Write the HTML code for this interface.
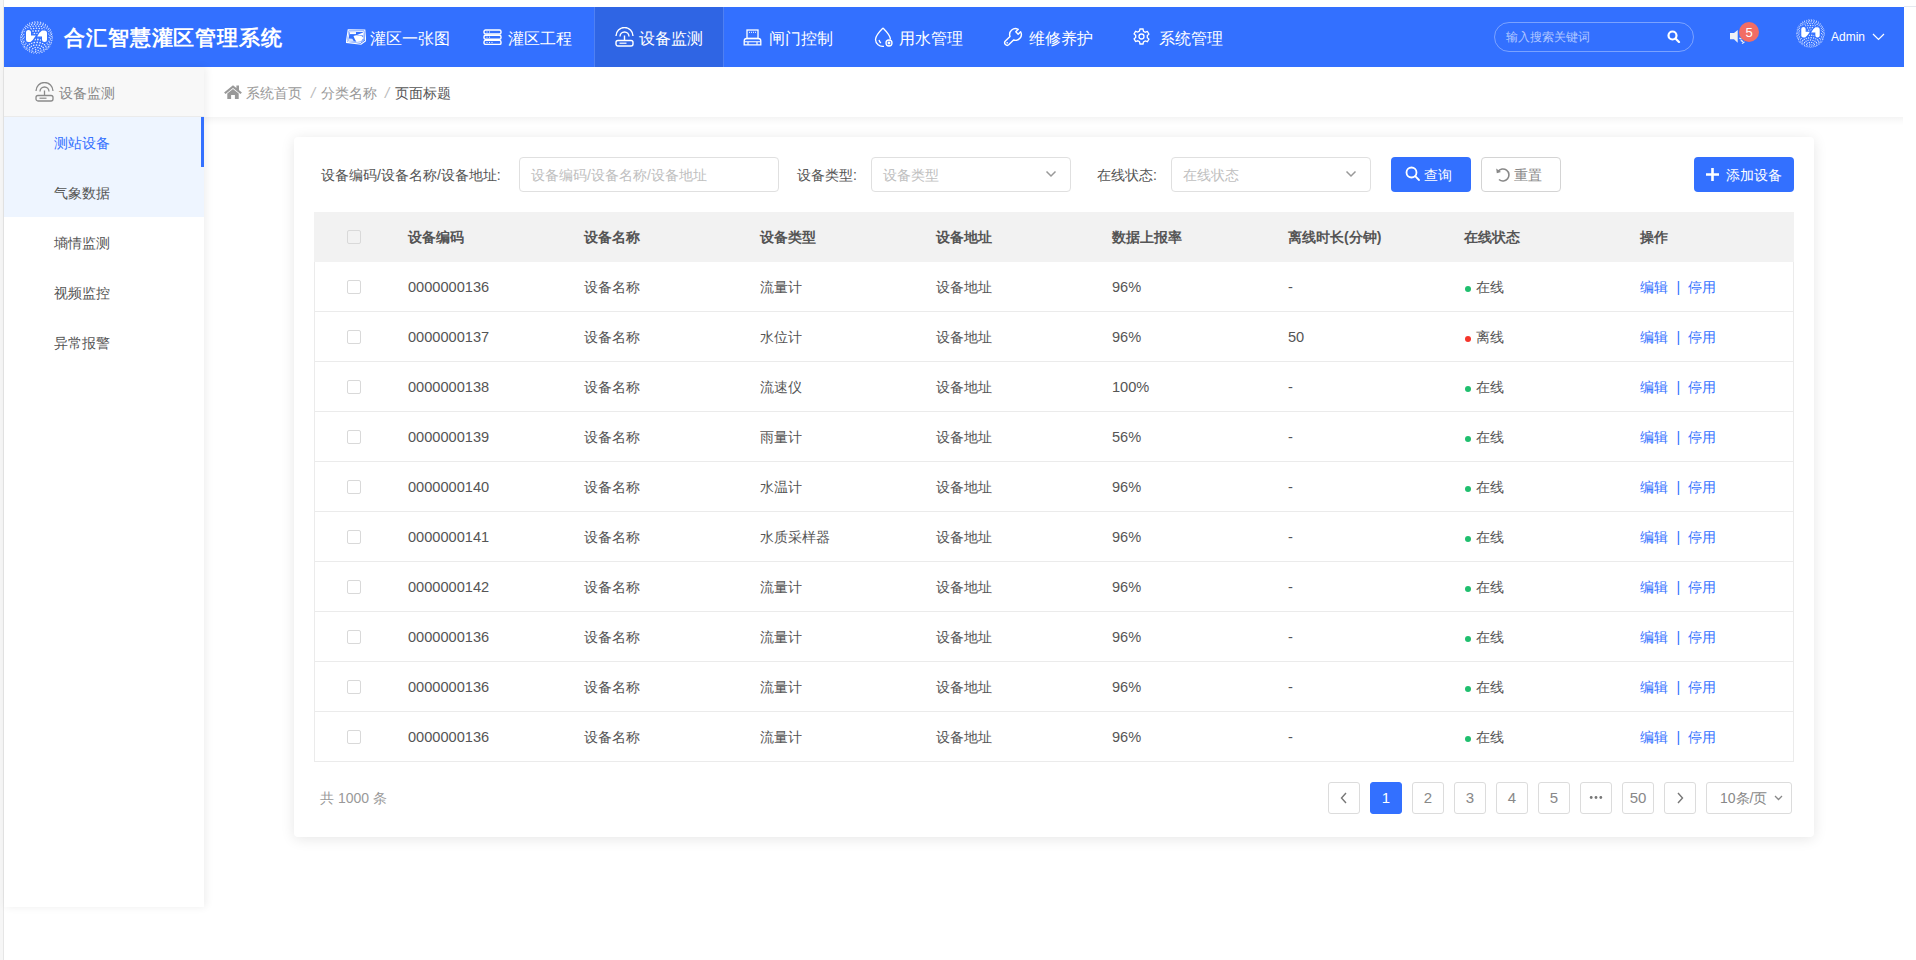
<!DOCTYPE html>
<html><head><meta charset="utf-8">
<style>
*{margin:0;padding:0;box-sizing:border-box}
html,body{width:1916px;height:960px;overflow:hidden;background:#fff;font-family:"Liberation Sans",sans-serif;}
.abs{position:absolute}
.t{position:absolute;white-space:nowrap;line-height:20px}
#strip{left:0;top:0;width:3px;height:960px;background:#f6f6f6}
#stripl{left:3px;top:0;width:1px;height:960px;background:#e6e6e6}
#topline{left:1904px;top:6px;width:12px;height:1px;background:#e4e9ef}
#hdr{left:4px;top:7px;width:1900px;height:60px;background:#3370ff}
.nav{color:#fff;font-size:16px;margin-top:1px}
#tab{left:594px;top:7px;width:130px;height:60px;background:#2f65e4;border-left:1px solid #4f80f2;border-right:1px solid #4f80f2}
#side{left:4px;top:67px;width:200px;height:840px;background:#fff;box-shadow:2px 0 8px rgba(0,0,0,.07)}
#sidehd{left:4px;top:67px;width:200px;height:50px;background:#f8f8f8;border-bottom:1px solid #ebebeb}
.mi{position:absolute;left:4px;width:200px;height:50px}
.mt{position:absolute;left:50px;top:16px;font-size:14px;line-height:20px;color:#555;white-space:nowrap}
#bc{left:204px;top:67px;width:1699px;height:50px;background:#fff}
#bcsh{left:204px;top:117px;width:1699px;height:9px;background:linear-gradient(rgba(0,0,0,.045),rgba(0,0,0,.015) 50%,rgba(0,0,0,0))}
#card{left:293.5px;top:137px;width:1520px;height:700px;background:#fff;border-radius:4px;box-shadow:0 2px 14px rgba(0,0,0,.1)}
.lbl{font-size:14px;color:#555}
.inp{position:absolute;top:157px;height:35px;border:1px solid #e0e0e0;border-radius:4px;background:#fff}
.ph{font-size:14px;color:#c0c0c0}
.btn{position:absolute;top:157px;height:35px;border-radius:4px}
#thead{left:314px;top:212px;width:1480px;height:50px;background:#f2f2f2}
#tbody{left:314px;top:262px;width:1480px;height:500px;border:1px solid #ebebeb;border-top:none}
.row{position:absolute;left:-1px;width:1480px;height:50px;border-bottom:1px solid #ebebeb}
.cb{position:absolute;left:33px;top:18px;width:14px;height:14px;border:1px solid #d9d9d9;border-radius:2px;background:#fff}
.th{position:absolute;top:15px;font-size:14px;line-height:20px;font-weight:bold;color:#555;white-space:nowrap}
.td{position:absolute;top:15px;font-size:14px;line-height:20px;color:#555;white-space:nowrap}
.num{font-size:14.6px}
.dot{position:absolute;left:1151px;top:24px;width:6px;height:6px;border-radius:50%}
.op{color:#3370ff}
.pg{position:absolute;top:782px;width:32px;height:32px;border:1px solid #dcdcdc;border-radius:3px;background:#fff;color:#888;font-size:15px;line-height:30px;text-align:center}
</style></head><body>
<div class="abs" id="strip"></div><div class="abs" id="stripl"></div><div class="abs" id="topline"></div>

<!-- HEADER -->
<div class="abs" id="hdr"></div>
<div class="abs" id="tab"></div>
<!-- logo -->
<svg class="abs" style="left:20px;top:21px" width="33" height="33" viewBox="0 0 33 33">
 
 <g fill="#fff" opacity=".85"><circle cx="20.1" cy="0.9" r="0.45"/><circle cx="17.2" cy="0.5" r="0.47"/><circle cx="14.3" cy="0.7" r="0.46"/><circle cx="25.4" cy="3.2" r="0.46"/><circle cx="23.3" cy="2.1" r="0.50"/><circle cx="20.7" cy="1.4" r="0.53"/><circle cx="17.9" cy="1.0" r="0.55"/><circle cx="15.1" cy="1.0" r="0.55"/><circle cx="12.3" cy="1.4" r="0.53"/><circle cx="9.7" cy="2.1" r="0.50"/><circle cx="7.6" cy="3.2" r="0.46"/><circle cx="27.5" cy="5.1" r="0.50"/><circle cx="25.6" cy="3.8" r="0.55"/><circle cx="23.3" cy="2.9" r="0.59"/><circle cx="20.7" cy="2.2" r="0.61"/><circle cx="17.9" cy="1.9" r="0.63"/><circle cx="15.1" cy="1.9" r="0.63"/><circle cx="12.3" cy="2.2" r="0.61"/><circle cx="9.7" cy="2.9" r="0.59"/><circle cx="7.4" cy="3.8" r="0.55"/><circle cx="5.5" cy="5.1" r="0.50"/><circle cx="30.4" cy="8.6" r="0.49"/><circle cx="29.1" cy="7.2" r="0.54"/><circle cx="27.3" cy="5.9" r="0.59"/><circle cx="25.2" cy="4.8" r="0.64"/><circle cx="22.7" cy="4.0" r="0.67"/><circle cx="20.0" cy="3.5" r="0.69"/><circle cx="17.2" cy="3.2" r="0.70"/><circle cx="14.4" cy="3.3" r="0.70"/><circle cx="11.6" cy="3.7" r="0.68"/><circle cx="9.0" cy="4.4" r="0.66"/><circle cx="6.7" cy="5.3" r="0.62"/><circle cx="4.8" cy="6.5" r="0.57"/><circle cx="3.2" cy="7.9" r="0.52"/><circle cx="2.2" cy="9.4" r="0.45"/><circle cx="32.0" cy="12.5" r="0.47"/><circle cx="31.2" cy="10.9" r="0.53"/><circle cx="30.0" cy="9.5" r="0.59"/><circle cx="28.3" cy="8.2" r="0.64"/><circle cx="26.3" cy="7.1" r="0.69"/><circle cx="24.0" cy="6.2" r="0.72"/><circle cx="21.4" cy="5.5" r="0.75"/><circle cx="18.6" cy="5.2" r="0.76"/><circle cx="15.8" cy="5.1" r="0.77"/><circle cx="13.0" cy="5.3" r="0.76"/><circle cx="10.3" cy="5.8" r="0.74"/><circle cx="7.8" cy="6.6" r="0.71"/><circle cx="5.6" cy="7.6" r="0.66"/><circle cx="3.8" cy="8.8" r="0.62"/><circle cx="2.3" cy="10.2" r="0.56"/><circle cx="1.3" cy="11.7" r="0.50"/><circle cx="32.5" cy="16.5" r="0.45"/><circle cx="32.3" cy="14.9" r="0.51"/><circle cx="31.5" cy="13.4" r="0.58"/><circle cx="30.4" cy="11.9" r="0.63"/><circle cx="28.8" cy="10.6" r="0.69"/><circle cx="26.8" cy="9.5" r="0.73"/><circle cx="24.5" cy="8.6" r="0.77"/><circle cx="22.0" cy="7.9" r="0.80"/><circle cx="19.3" cy="7.5" r="0.81"/><circle cx="16.5" cy="7.3" r="0.82"/><circle cx="13.7" cy="7.5" r="0.81"/><circle cx="11.0" cy="7.9" r="0.80"/><circle cx="8.5" cy="8.6" r="0.77"/><circle cx="6.2" cy="9.5" r="0.73"/><circle cx="4.2" cy="10.6" r="0.69"/><circle cx="2.6" cy="11.9" r="0.63"/><circle cx="1.5" cy="13.4" r="0.58"/><circle cx="0.7" cy="14.9" r="0.51"/><circle cx="0.5" cy="16.5" r="0.45"/><circle cx="32.2" cy="18.9" r="0.50"/><circle cx="32.0" cy="17.3" r="0.56"/><circle cx="31.2" cy="15.7" r="0.62"/><circle cx="30.0" cy="14.3" r="0.68"/><circle cx="28.3" cy="13.0" r="0.74"/><circle cx="26.3" cy="11.8" r="0.78"/><circle cx="24.0" cy="10.9" r="0.82"/><circle cx="21.4" cy="10.3" r="0.84"/><circle cx="18.6" cy="9.9" r="0.86"/><circle cx="15.8" cy="9.9" r="0.86"/><circle cx="13.0" cy="10.1" r="0.85"/><circle cx="10.3" cy="10.6" r="0.83"/><circle cx="7.8" cy="11.4" r="0.80"/><circle cx="5.6" cy="12.4" r="0.76"/><circle cx="3.8" cy="13.6" r="0.71"/><circle cx="2.3" cy="15.0" r="0.65"/><circle cx="1.3" cy="16.5" r="0.59"/><circle cx="0.8" cy="18.1" r="0.53"/><circle cx="0.8" cy="19.7" r="0.46"/><circle cx="31.4" cy="21.2" r="0.54"/><circle cx="31.2" cy="19.6" r="0.61"/><circle cx="30.4" cy="18.0" r="0.67"/><circle cx="29.1" cy="16.6" r="0.73"/><circle cx="27.3" cy="15.3" r="0.78"/><circle cx="25.2" cy="14.2" r="0.82"/><circle cx="22.7" cy="13.4" r="0.86"/><circle cx="20.0" cy="12.9" r="0.88"/><circle cx="17.2" cy="12.6" r="0.89"/><circle cx="14.4" cy="12.7" r="0.88"/><circle cx="11.6" cy="13.1" r="0.87"/><circle cx="9.0" cy="13.8" r="0.84"/><circle cx="6.7" cy="14.7" r="0.80"/><circle cx="4.8" cy="15.9" r="0.76"/><circle cx="3.2" cy="17.3" r="0.70"/><circle cx="2.2" cy="18.8" r="0.64"/><circle cx="1.6" cy="20.4" r="0.58"/><circle cx="1.6" cy="22.0" r="0.51"/><circle cx="31.2" cy="22.8" r="0.48"/><circle cx="30.1" cy="23.3" r="0.58"/><circle cx="29.8" cy="21.7" r="0.65"/><circle cx="29.0" cy="20.2" r="0.71"/><circle cx="27.5" cy="18.7" r="0.77"/><circle cx="25.6" cy="17.5" r="0.82"/><circle cx="23.3" cy="16.6" r="0.86"/><circle cx="20.7" cy="15.9" r="0.88"/><circle cx="17.9" cy="15.6" r="0.90"/><circle cx="15.1" cy="15.6" r="0.90"/><circle cx="12.3" cy="15.9" r="0.88"/><circle cx="9.7" cy="16.6" r="0.86"/><circle cx="7.4" cy="17.5" r="0.82"/><circle cx="5.5" cy="18.7" r="0.77"/><circle cx="4.0" cy="20.2" r="0.71"/><circle cx="3.2" cy="21.7" r="0.65"/><circle cx="2.9" cy="23.3" r="0.58"/><circle cx="3.2" cy="25.0" r="0.52"/><circle cx="4.0" cy="26.5" r="0.46"/><circle cx="29.0" cy="26.5" r="0.46"/><circle cx="29.8" cy="25.0" r="0.52"/><circle cx="28.4" cy="25.3" r="0.62"/><circle cx="28.0" cy="23.6" r="0.69"/><circle cx="27.0" cy="22.1" r="0.75"/><circle cx="25.4" cy="20.7" r="0.80"/><circle cx="23.3" cy="19.7" r="0.85"/><circle cx="20.7" cy="18.9" r="0.88"/><circle cx="17.9" cy="18.5" r="0.89"/><circle cx="15.1" cy="18.5" r="0.89"/><circle cx="12.3" cy="18.9" r="0.88"/><circle cx="9.7" cy="19.7" r="0.85"/><circle cx="7.6" cy="20.7" r="0.80"/><circle cx="6.0" cy="22.1" r="0.75"/><circle cx="5.0" cy="23.6" r="0.69"/><circle cx="4.6" cy="25.3" r="0.62"/><circle cx="5.0" cy="26.9" r="0.56"/><circle cx="6.0" cy="28.4" r="0.50"/><circle cx="27.0" cy="28.4" r="0.50"/><circle cx="28.0" cy="26.9" r="0.56"/><circle cx="26.2" cy="26.9" r="0.65"/><circle cx="25.8" cy="25.3" r="0.72"/><circle cx="24.5" cy="23.8" r="0.78"/><circle cx="22.6" cy="22.5" r="0.83"/><circle cx="20.1" cy="21.7" r="0.86"/><circle cx="17.2" cy="21.3" r="0.88"/><circle cx="14.3" cy="21.5" r="0.87"/><circle cx="11.6" cy="22.1" r="0.85"/><circle cx="9.4" cy="23.1" r="0.81"/><circle cx="7.7" cy="24.5" r="0.75"/><circle cx="6.9" cy="26.1" r="0.69"/><circle cx="6.9" cy="27.7" r="0.62"/><circle cx="7.7" cy="29.3" r="0.56"/><circle cx="9.4" cy="30.7" r="0.50"/><circle cx="11.6" cy="31.7" r="0.46"/><circle cx="22.6" cy="31.3" r="0.48"/><circle cx="24.5" cy="30.0" r="0.53"/><circle cx="25.8" cy="28.5" r="0.59"/><circle cx="23.8" cy="28.2" r="0.68"/><circle cx="23.2" cy="26.6" r="0.74"/><circle cx="21.6" cy="25.2" r="0.80"/><circle cx="19.3" cy="24.3" r="0.83"/><circle cx="16.5" cy="24.0" r="0.85"/><circle cx="13.7" cy="24.3" r="0.83"/><circle cx="11.4" cy="25.2" r="0.80"/><circle cx="9.8" cy="26.6" r="0.74"/><circle cx="9.2" cy="28.2" r="0.68"/><circle cx="9.8" cy="29.8" r="0.62"/><circle cx="11.4" cy="31.1" r="0.56"/><circle cx="13.7" cy="32.0" r="0.53"/><circle cx="16.5" cy="32.3" r="0.51"/><circle cx="19.3" cy="32.0" r="0.53"/><circle cx="21.6" cy="31.1" r="0.56"/><circle cx="23.2" cy="29.8" r="0.62"/><circle cx="21.0" cy="29.1" r="0.70"/><circle cx="20.2" cy="27.5" r="0.76"/><circle cx="17.9" cy="26.6" r="0.80"/><circle cx="15.1" cy="26.6" r="0.80"/><circle cx="12.8" cy="27.5" r="0.76"/><circle cx="12.0" cy="29.1" r="0.70"/><circle cx="12.8" cy="30.6" r="0.64"/><circle cx="15.1" cy="31.5" r="0.60"/><circle cx="17.9" cy="31.5" r="0.60"/><circle cx="20.2" cy="30.6" r="0.64"/><circle cx="18.2" cy="29.5" r="0.71"/><circle cx="15.7" cy="28.7" r="0.74"/><circle cx="15.7" cy="30.4" r="0.67"/></g>
 <path stroke="#3370ff" stroke-width="2.6" d="M6 11.5 Q6 9 8.5 9 Q11 9 11 11.5 V14.6 H15.8 Q13 19.5 10.5 21 H8.3 Q6 21 6 18.7 Z M22 9.5 H24.5 Q27 9.5 27 12 V18.7 Q27 21 24.5 21 Q22 21 22 18.7 V15.4 H17.2 Q19 11.5 22 9.5 Z" fill="#3370ff"/><path d="M6 11.5 Q6 9 8.5 9 Q11 9 11 11.5 V14.6 H15.8 Q13 19.5 10.5 21 H8.3 Q6 21 6 18.7 Z M22 9.5 H24.5 Q27 9.5 27 12 V18.7 Q27 21 24.5 21 Q22 21 22 18.7 V15.4 H17.2 Q19 11.5 22 9.5 Z" fill="#fff"/>
</svg>
<div class="t" style="left:64px;top:27px;font-size:20.6px;line-height:22px;font-weight:900;color:#fff;letter-spacing:0.9px">合汇智慧灌区管理系统</div>

<!-- nav icons -->
<svg class="abs" style="left:346px;top:29px" width="20" height="16" viewBox="0 0 20 16" fill="none" stroke="#fff"><path d="M2.2 0.9 L18.8 1 L19.7 11.7 L15 15.2 L0.3 13.4 Z" stroke-width="1.1"/><path d="M3.3 2.3 L17.5 2.5 L18 10.5 L15 13.5 L1.6 12.5 Z" stroke-width=".9"/><g fill="#fff" stroke="none"><rect x="4" y="3.1" width="6" height="2"/><path d="M11 6 L17 3.6 L17 6.4 Z"/><path d="M7.5 7 Q10 5.6 13 6.5 Q16.5 6.3 17.6 9 L15 12.6 L10.5 13 Q8.5 10 7.5 7 Z"/><path d="M2.6 9.6 L6.3 9.8 L7.8 12.2 L2.3 12 Z" opacity=".8"/></g></svg>
<div class="t nav" style="left:370px;top:28px">灌区一张图</div>
<svg class="abs" style="left:483px;top:29px" width="19" height="16" viewBox="0 0 19 16" fill="none" stroke="#fff" stroke-width="1.4"><rect x="1" y="1" width="17" height="4" rx="1.5"/><rect x="1" y="6.2" width="17" height="4" rx="1.5"/><rect x="1" y="11.4" width="17" height="4" rx="1.5"/><path d="M3.5 3h1M6 3h1M3.5 8.2h1M6 8.2h1M3.5 13.4h1M6 13.4h1M8.5 13.4h1" stroke-width="1"/></svg>
<div class="t nav" style="left:508px;top:28px">灌区工程</div>
<svg class="abs" style="left:615px;top:27px" width="19" height="20" viewBox="0 0 19 20" fill="none" stroke="#fff" stroke-width="1.4"><path d="M1 9 A8.5 8.5 0 0 1 18 9"/><path d="M5 9.5 A4.5 4.5 0 0 1 14 9.5"/><path d="M9.5 8.5 V13"/><rect x="1" y="13.5" width="17" height="5.5" rx="2"/><path d="M4.5 16.2 h7" stroke-width="1.2"/></svg>
<div class="t nav" style="left:639px;top:28px">设备监测</div>
<svg class="abs" style="left:743px;top:29px" width="19" height="17" viewBox="0 0 19 17" fill="none" stroke="#fff" stroke-width="1.3"><rect x="4" y="1" width="11" height="8.5"/><path d="M6 3.3h1M8 3.3h1M10 3.3h1M12 3.3h1" stroke-width="1"/><path d="M1.2 15.8 V12 Q1.2 9.5 3.8 9.5 H15.2 Q17.8 9.5 17.8 12 V15.8 Z"/><path d="M1.2 12.8 H17.8 M5 15.8 V12.8 M14 15.8 V12.8" stroke-width="1.1"/></svg>
<div class="t nav" style="left:769px;top:28px">闸门控制</div>
<svg class="abs" style="left:874px;top:27px" width="19" height="20" viewBox="0 0 19 20" fill="none" stroke="#fff" stroke-width="1.3"><path d="M9 1 C5 5 1.5 9 1.5 12.5 A7.5 7 0 0 0 10 19.3"/><path d="M9 1 C13 5 16.5 9 16.5 12.5"/><circle cx="15" cy="16" r="3"/><circle cx="15" cy="16" r=".8" fill="#fff"/><path d="M5 13 Q5.5 15 7 16" /></svg>
<div class="t nav" style="left:899px;top:28px">用水管理</div>
<svg class="abs" style="left:1003px;top:27px" width="20" height="20" viewBox="0 0 24 24" fill="none" stroke="#fff" stroke-width="1.7" stroke-linejoin="round"><path d="M8.41 11.35 A7 7 0 0 1 18.33 2.84 L15.36 5.82 L18.18 8.64 L21.16 5.67 A7 7 0 0 1 12.65 15.59 L7.12 21.12 A3 3 0 0 1 2.88 16.88 Z"/><circle cx="5" cy="19" r="1" fill="#fff" stroke="none"/></svg>
<div class="t nav" style="left:1029px;top:28px">维修养护</div>
<svg class="abs" style="left:1133px;top:28px" width="17" height="17" viewBox="0 0 17 17" fill="none" stroke="#fff" stroke-width="1.3"><path d="M7 1 h3 l.5 2.2 l1.8 1 l2.1 -.7 l1.5 2.6 l-1.6 1.5 v2 l1.6 1.5 l-1.5 2.6 l-2.1 -.7 l-1.8 1 L10 16 H7 l-.5 -2.2 l-1.8 -1 l-2.1 .7 L1.1 10.9 l1.6 -1.5 v-2 L1.1 5.9 l1.5 -2.6 l2.1 .7 l1.8 -1 Z"/><circle cx="8.5" cy="8.5" r="2.5"/></svg>
<div class="t nav" style="left:1159px;top:28px">系统管理</div>

<!-- search -->
<div class="abs" style="left:1494px;top:22px;width:200px;height:30px;border:1px solid rgba(255,255,255,.35);border-radius:15px"></div>
<div class="t" style="left:1506px;top:27px;font-size:12px;color:rgba(255,255,255,.62)">输入搜索关键词</div>
<svg class="abs" style="left:1667px;top:30px" width="14" height="13" viewBox="0 0 14 13" fill="none" stroke="#fff" stroke-width="2.2"><circle cx="5.5" cy="5.5" r="4"/><path d="M8.5 8.5 L12 12" stroke-linecap="round"/></svg>
<!-- bell -->
<svg class="abs" style="left:1729px;top:29px" width="18" height="17" viewBox="0 0 18 17"><path d="M1 4 H5 L8.7 1 V13.7 L5 10.3 H1 Z" fill="#eef0f6"/><path d="M10.8 9.3 l1.3 .6 M12.2 11.6 l1.4 .8 M13.4 14.2 l1.6 -1" stroke="#eef0f6" stroke-width="1.3" stroke-linecap="round"/></svg>
<div class="abs" style="left:1739px;top:22px;width:20px;height:20px;border-radius:50%;background:#f26d64;color:#fff;font-size:13px;line-height:21px;text-align:center">5</div>
<!-- avatar -->
<svg class="abs" style="left:1796px;top:19px" width="29" height="29" viewBox="0 0 33 33">
 <g fill="#fff" opacity=".85"><circle cx="20.1" cy="0.9" r="0.45"/><circle cx="17.2" cy="0.5" r="0.47"/><circle cx="14.3" cy="0.7" r="0.46"/><circle cx="25.4" cy="3.2" r="0.46"/><circle cx="23.3" cy="2.1" r="0.50"/><circle cx="20.7" cy="1.4" r="0.53"/><circle cx="17.9" cy="1.0" r="0.55"/><circle cx="15.1" cy="1.0" r="0.55"/><circle cx="12.3" cy="1.4" r="0.53"/><circle cx="9.7" cy="2.1" r="0.50"/><circle cx="7.6" cy="3.2" r="0.46"/><circle cx="27.5" cy="5.1" r="0.50"/><circle cx="25.6" cy="3.8" r="0.55"/><circle cx="23.3" cy="2.9" r="0.59"/><circle cx="20.7" cy="2.2" r="0.61"/><circle cx="17.9" cy="1.9" r="0.63"/><circle cx="15.1" cy="1.9" r="0.63"/><circle cx="12.3" cy="2.2" r="0.61"/><circle cx="9.7" cy="2.9" r="0.59"/><circle cx="7.4" cy="3.8" r="0.55"/><circle cx="5.5" cy="5.1" r="0.50"/><circle cx="30.4" cy="8.6" r="0.49"/><circle cx="29.1" cy="7.2" r="0.54"/><circle cx="27.3" cy="5.9" r="0.59"/><circle cx="25.2" cy="4.8" r="0.64"/><circle cx="22.7" cy="4.0" r="0.67"/><circle cx="20.0" cy="3.5" r="0.69"/><circle cx="17.2" cy="3.2" r="0.70"/><circle cx="14.4" cy="3.3" r="0.70"/><circle cx="11.6" cy="3.7" r="0.68"/><circle cx="9.0" cy="4.4" r="0.66"/><circle cx="6.7" cy="5.3" r="0.62"/><circle cx="4.8" cy="6.5" r="0.57"/><circle cx="3.2" cy="7.9" r="0.52"/><circle cx="2.2" cy="9.4" r="0.45"/><circle cx="32.0" cy="12.5" r="0.47"/><circle cx="31.2" cy="10.9" r="0.53"/><circle cx="30.0" cy="9.5" r="0.59"/><circle cx="28.3" cy="8.2" r="0.64"/><circle cx="26.3" cy="7.1" r="0.69"/><circle cx="24.0" cy="6.2" r="0.72"/><circle cx="21.4" cy="5.5" r="0.75"/><circle cx="18.6" cy="5.2" r="0.76"/><circle cx="15.8" cy="5.1" r="0.77"/><circle cx="13.0" cy="5.3" r="0.76"/><circle cx="10.3" cy="5.8" r="0.74"/><circle cx="7.8" cy="6.6" r="0.71"/><circle cx="5.6" cy="7.6" r="0.66"/><circle cx="3.8" cy="8.8" r="0.62"/><circle cx="2.3" cy="10.2" r="0.56"/><circle cx="1.3" cy="11.7" r="0.50"/><circle cx="32.5" cy="16.5" r="0.45"/><circle cx="32.3" cy="14.9" r="0.51"/><circle cx="31.5" cy="13.4" r="0.58"/><circle cx="30.4" cy="11.9" r="0.63"/><circle cx="28.8" cy="10.6" r="0.69"/><circle cx="26.8" cy="9.5" r="0.73"/><circle cx="24.5" cy="8.6" r="0.77"/><circle cx="22.0" cy="7.9" r="0.80"/><circle cx="19.3" cy="7.5" r="0.81"/><circle cx="16.5" cy="7.3" r="0.82"/><circle cx="13.7" cy="7.5" r="0.81"/><circle cx="11.0" cy="7.9" r="0.80"/><circle cx="8.5" cy="8.6" r="0.77"/><circle cx="6.2" cy="9.5" r="0.73"/><circle cx="4.2" cy="10.6" r="0.69"/><circle cx="2.6" cy="11.9" r="0.63"/><circle cx="1.5" cy="13.4" r="0.58"/><circle cx="0.7" cy="14.9" r="0.51"/><circle cx="0.5" cy="16.5" r="0.45"/><circle cx="32.2" cy="18.9" r="0.50"/><circle cx="32.0" cy="17.3" r="0.56"/><circle cx="31.2" cy="15.7" r="0.62"/><circle cx="30.0" cy="14.3" r="0.68"/><circle cx="28.3" cy="13.0" r="0.74"/><circle cx="26.3" cy="11.8" r="0.78"/><circle cx="24.0" cy="10.9" r="0.82"/><circle cx="21.4" cy="10.3" r="0.84"/><circle cx="18.6" cy="9.9" r="0.86"/><circle cx="15.8" cy="9.9" r="0.86"/><circle cx="13.0" cy="10.1" r="0.85"/><circle cx="10.3" cy="10.6" r="0.83"/><circle cx="7.8" cy="11.4" r="0.80"/><circle cx="5.6" cy="12.4" r="0.76"/><circle cx="3.8" cy="13.6" r="0.71"/><circle cx="2.3" cy="15.0" r="0.65"/><circle cx="1.3" cy="16.5" r="0.59"/><circle cx="0.8" cy="18.1" r="0.53"/><circle cx="0.8" cy="19.7" r="0.46"/><circle cx="31.4" cy="21.2" r="0.54"/><circle cx="31.2" cy="19.6" r="0.61"/><circle cx="30.4" cy="18.0" r="0.67"/><circle cx="29.1" cy="16.6" r="0.73"/><circle cx="27.3" cy="15.3" r="0.78"/><circle cx="25.2" cy="14.2" r="0.82"/><circle cx="22.7" cy="13.4" r="0.86"/><circle cx="20.0" cy="12.9" r="0.88"/><circle cx="17.2" cy="12.6" r="0.89"/><circle cx="14.4" cy="12.7" r="0.88"/><circle cx="11.6" cy="13.1" r="0.87"/><circle cx="9.0" cy="13.8" r="0.84"/><circle cx="6.7" cy="14.7" r="0.80"/><circle cx="4.8" cy="15.9" r="0.76"/><circle cx="3.2" cy="17.3" r="0.70"/><circle cx="2.2" cy="18.8" r="0.64"/><circle cx="1.6" cy="20.4" r="0.58"/><circle cx="1.6" cy="22.0" r="0.51"/><circle cx="31.2" cy="22.8" r="0.48"/><circle cx="30.1" cy="23.3" r="0.58"/><circle cx="29.8" cy="21.7" r="0.65"/><circle cx="29.0" cy="20.2" r="0.71"/><circle cx="27.5" cy="18.7" r="0.77"/><circle cx="25.6" cy="17.5" r="0.82"/><circle cx="23.3" cy="16.6" r="0.86"/><circle cx="20.7" cy="15.9" r="0.88"/><circle cx="17.9" cy="15.6" r="0.90"/><circle cx="15.1" cy="15.6" r="0.90"/><circle cx="12.3" cy="15.9" r="0.88"/><circle cx="9.7" cy="16.6" r="0.86"/><circle cx="7.4" cy="17.5" r="0.82"/><circle cx="5.5" cy="18.7" r="0.77"/><circle cx="4.0" cy="20.2" r="0.71"/><circle cx="3.2" cy="21.7" r="0.65"/><circle cx="2.9" cy="23.3" r="0.58"/><circle cx="3.2" cy="25.0" r="0.52"/><circle cx="4.0" cy="26.5" r="0.46"/><circle cx="29.0" cy="26.5" r="0.46"/><circle cx="29.8" cy="25.0" r="0.52"/><circle cx="28.4" cy="25.3" r="0.62"/><circle cx="28.0" cy="23.6" r="0.69"/><circle cx="27.0" cy="22.1" r="0.75"/><circle cx="25.4" cy="20.7" r="0.80"/><circle cx="23.3" cy="19.7" r="0.85"/><circle cx="20.7" cy="18.9" r="0.88"/><circle cx="17.9" cy="18.5" r="0.89"/><circle cx="15.1" cy="18.5" r="0.89"/><circle cx="12.3" cy="18.9" r="0.88"/><circle cx="9.7" cy="19.7" r="0.85"/><circle cx="7.6" cy="20.7" r="0.80"/><circle cx="6.0" cy="22.1" r="0.75"/><circle cx="5.0" cy="23.6" r="0.69"/><circle cx="4.6" cy="25.3" r="0.62"/><circle cx="5.0" cy="26.9" r="0.56"/><circle cx="6.0" cy="28.4" r="0.50"/><circle cx="27.0" cy="28.4" r="0.50"/><circle cx="28.0" cy="26.9" r="0.56"/><circle cx="26.2" cy="26.9" r="0.65"/><circle cx="25.8" cy="25.3" r="0.72"/><circle cx="24.5" cy="23.8" r="0.78"/><circle cx="22.6" cy="22.5" r="0.83"/><circle cx="20.1" cy="21.7" r="0.86"/><circle cx="17.2" cy="21.3" r="0.88"/><circle cx="14.3" cy="21.5" r="0.87"/><circle cx="11.6" cy="22.1" r="0.85"/><circle cx="9.4" cy="23.1" r="0.81"/><circle cx="7.7" cy="24.5" r="0.75"/><circle cx="6.9" cy="26.1" r="0.69"/><circle cx="6.9" cy="27.7" r="0.62"/><circle cx="7.7" cy="29.3" r="0.56"/><circle cx="9.4" cy="30.7" r="0.50"/><circle cx="11.6" cy="31.7" r="0.46"/><circle cx="22.6" cy="31.3" r="0.48"/><circle cx="24.5" cy="30.0" r="0.53"/><circle cx="25.8" cy="28.5" r="0.59"/><circle cx="23.8" cy="28.2" r="0.68"/><circle cx="23.2" cy="26.6" r="0.74"/><circle cx="21.6" cy="25.2" r="0.80"/><circle cx="19.3" cy="24.3" r="0.83"/><circle cx="16.5" cy="24.0" r="0.85"/><circle cx="13.7" cy="24.3" r="0.83"/><circle cx="11.4" cy="25.2" r="0.80"/><circle cx="9.8" cy="26.6" r="0.74"/><circle cx="9.2" cy="28.2" r="0.68"/><circle cx="9.8" cy="29.8" r="0.62"/><circle cx="11.4" cy="31.1" r="0.56"/><circle cx="13.7" cy="32.0" r="0.53"/><circle cx="16.5" cy="32.3" r="0.51"/><circle cx="19.3" cy="32.0" r="0.53"/><circle cx="21.6" cy="31.1" r="0.56"/><circle cx="23.2" cy="29.8" r="0.62"/><circle cx="21.0" cy="29.1" r="0.70"/><circle cx="20.2" cy="27.5" r="0.76"/><circle cx="17.9" cy="26.6" r="0.80"/><circle cx="15.1" cy="26.6" r="0.80"/><circle cx="12.8" cy="27.5" r="0.76"/><circle cx="12.0" cy="29.1" r="0.70"/><circle cx="12.8" cy="30.6" r="0.64"/><circle cx="15.1" cy="31.5" r="0.60"/><circle cx="17.9" cy="31.5" r="0.60"/><circle cx="20.2" cy="30.6" r="0.64"/><circle cx="18.2" cy="29.5" r="0.71"/><circle cx="15.7" cy="28.7" r="0.74"/><circle cx="15.7" cy="30.4" r="0.67"/></g>
 <path stroke="#3370ff" stroke-width="2.6" d="M6 11.5 Q6 9 8.5 9 Q11 9 11 11.5 V14.6 H15.8 Q13 19.5 10.5 21 H8.3 Q6 21 6 18.7 Z M22 9.5 H24.5 Q27 9.5 27 12 V18.7 Q27 21 24.5 21 Q22 21 22 18.7 V15.4 H17.2 Q19 11.5 22 9.5 Z" fill="#3370ff"/><path d="M6 11.5 Q6 9 8.5 9 Q11 9 11 11.5 V14.6 H15.8 Q13 19.5 10.5 21 H8.3 Q6 21 6 18.7 Z M22 9.5 H24.5 Q27 9.5 27 12 V18.7 Q27 21 24.5 21 Q22 21 22 18.7 V15.4 H17.2 Q19 11.5 22 9.5 Z" fill="#fff"/>
</svg>
<div class="t" style="left:1831px;top:27px;font-size:12px;color:#fff">Admin</div>
<svg class="abs" style="left:1872px;top:33px" width="13" height="8" viewBox="0 0 13 8" fill="none" stroke="#fff" stroke-width="1.2"><path d="M1 1 L6.5 6.5 L12 1"/></svg>

<!-- BREADCRUMB -->
<div class="abs" id="bc"></div><div class="abs" id="bcsh"></div>
<svg class="abs" style="left:224px;top:85px" width="18" height="14" viewBox="0 0 18 14"><path d="M9 0.3 L17.9 7.5 L16.5 9.1 L9 3 L1.5 9.1 L0.1 7.5 Z M12.4 0.6 h2.6 v4.6 L12.4 3.1 Z M3.3 8.6 L9 4 L14.7 8.6 V14 H10.9 V10 H7.1 V14 H3.3 Z" fill="#999"/></svg>
<div class="t" style="left:246px;top:83px;font-size:14px;color:#999">系统首页</div>
<div class="t" style="left:311px;top:83px;font-size:15px;color:#bbb;font-style:italic">/</div>
<div class="t" style="left:321px;top:83px;font-size:14px;color:#999">分类名称</div>
<div class="t" style="left:385px;top:83px;font-size:15px;color:#bbb;font-style:italic">/</div>
<div class="t" style="left:395px;top:83px;font-size:14px;color:#555">页面标题</div>

<!-- SIDEBAR -->
<div class="abs" id="side"></div>
<div class="abs" id="sidehd"></div>
<svg class="abs" style="left:35px;top:82px" width="19" height="20" viewBox="0 0 19 20" fill="none" stroke="#8a8a8a" stroke-width="1.3"><path d="M1 9 A8.5 8.5 0 0 1 18 9"/><path d="M5 9.5 A4.5 4.5 0 0 1 14 9.5"/><path d="M9.5 8.5 V13"/><rect x="1" y="13.5" width="17" height="5.5" rx="2"/><path d="M4.5 16.2 h7" stroke-width="1.2"/></svg>
<div class="t" style="left:59px;top:83px;font-size:14px;color:#888">设备监测</div>
<div class="mi" style="top:117px;background:#eef5ff"><div class="mt" style="color:#3370ff">测站设备</div><div class="abs" style="left:197px;top:0;width:3px;height:50px;background:#3370ff"></div></div>
<div class="mi" style="top:167px;background:#eef5ff"><div class="mt">气象数据</div></div>
<div class="mi" style="top:217px"><div class="mt">墒情监测</div></div>
<div class="mi" style="top:267px"><div class="mt">视频监控</div></div>
<div class="mi" style="top:317px"><div class="mt">异常报警</div></div>

<!-- CARD -->
<div class="abs" id="card"></div>
<div class="t lbl" style="left:321px;top:165px">设备编码/设备名称/设备地址:</div>
<div class="inp" style="left:519px;width:260px"></div>
<div class="t ph" style="left:531px;top:165px">设备编码/设备名称/设备地址</div>
<div class="t lbl" style="left:797px;top:165px">设备类型:</div>
<div class="inp" style="left:871px;width:200px"></div>
<div class="t ph" style="left:883px;top:165px">设备类型</div>
<svg class="abs" style="left:1045px;top:170px" width="12" height="8" viewBox="0 0 12 8" fill="none" stroke="#999" stroke-width="1.5"><path d="M1.5 1.5 L6 6 L10.5 1.5"/></svg>
<div class="t lbl" style="left:1097px;top:165px">在线状态:</div>
<div class="inp" style="left:1171px;width:200px"></div>
<div class="t ph" style="left:1183px;top:165px">在线状态</div>
<svg class="abs" style="left:1345px;top:170px" width="12" height="8" viewBox="0 0 12 8" fill="none" stroke="#999" stroke-width="1.5"><path d="M1.5 1.5 L6 6 L10.5 1.5"/></svg>

<div class="btn" style="left:1391px;width:80px;background:#3370ff"></div>
<svg class="abs" style="left:1405px;top:166px" width="16" height="16" viewBox="0 0 16 16" fill="none" stroke="#fff" stroke-width="1.8"><circle cx="6.5" cy="6.5" r="5"/><path d="M10.2 10.2 L14 14" stroke-linecap="round"/></svg>
<div class="t" style="left:1424px;top:165px;font-size:14px;color:#fff">查询</div>
<div class="btn" style="left:1481px;width:80px;border:1px solid #d4d4d4;background:#fff"></div>
<svg class="abs" style="left:1495px;top:167px" width="15" height="15" viewBox="0 0 15 15" fill="none" stroke="#888" stroke-width="1.6"><path d="M3 4.5 A6 6 0 1 1 4 12.5"/><path d="M1.2 1.5 L1.8 6.2 L6 5" fill="#888" stroke="none"/></svg>
<div class="t" style="left:1514px;top:165px;font-size:14px;color:#888">重置</div>
<div class="btn" style="left:1694px;width:100px;background:#3370ff"></div>
<svg class="abs" style="left:1706px;top:168px" width="13" height="13" viewBox="0 0 13 13" stroke="#fff" stroke-width="2.6"><path d="M6.5 0 V13 M0 6.5 H13"/></svg>
<div class="t" style="left:1726px;top:165px;font-size:14px;color:#fff">添加设备</div>

<!-- TABLE -->
<div class="abs" id="thead">
 <div class="cb" style="background:transparent"></div>
 <div class="th" style="left:94px">设备编码</div>
 <div class="th" style="left:270px">设备名称</div>
 <div class="th" style="left:446px">设备类型</div>
 <div class="th" style="left:622px">设备地址</div>
 <div class="th" style="left:798px">数据上报率</div>
 <div class="th" style="left:974px">离线时长(分钟)</div>
 <div class="th" style="left:1150px">在线状态</div>
 <div class="th" style="left:1326px">操作</div>
</div>
<div class="abs" id="tbody">
<div class="row" style="top:0px"><div class="cb"></div><div class="td num" style="left:94px">0000000136</div><div class="td" style="left:270px">设备名称</div><div class="td" style="left:446px">流量计</div><div class="td" style="left:622px">设备地址</div><div class="td num" style="left:798px">96%</div><div class="td num" style="left:974px">-</div><div class="dot" style="background:#1fbf6e"></div><div class="td" style="left:1162px">在线</div><div class="td op" style="left:1326px">编辑</div><div class="td op" style="left:1362.5px">|</div><div class="td op" style="left:1374px">停用</div></div>
<div class="row" style="top:50px"><div class="cb"></div><div class="td num" style="left:94px">0000000137</div><div class="td" style="left:270px">设备名称</div><div class="td" style="left:446px">水位计</div><div class="td" style="left:622px">设备地址</div><div class="td num" style="left:798px">96%</div><div class="td num" style="left:974px">50</div><div class="dot" style="background:#f5352b"></div><div class="td" style="left:1162px">离线</div><div class="td op" style="left:1326px">编辑</div><div class="td op" style="left:1362.5px">|</div><div class="td op" style="left:1374px">停用</div></div>
<div class="row" style="top:100px"><div class="cb"></div><div class="td num" style="left:94px">0000000138</div><div class="td" style="left:270px">设备名称</div><div class="td" style="left:446px">流速仪</div><div class="td" style="left:622px">设备地址</div><div class="td num" style="left:798px">100%</div><div class="td num" style="left:974px">-</div><div class="dot" style="background:#1fbf6e"></div><div class="td" style="left:1162px">在线</div><div class="td op" style="left:1326px">编辑</div><div class="td op" style="left:1362.5px">|</div><div class="td op" style="left:1374px">停用</div></div>
<div class="row" style="top:150px"><div class="cb"></div><div class="td num" style="left:94px">0000000139</div><div class="td" style="left:270px">设备名称</div><div class="td" style="left:446px">雨量计</div><div class="td" style="left:622px">设备地址</div><div class="td num" style="left:798px">56%</div><div class="td num" style="left:974px">-</div><div class="dot" style="background:#1fbf6e"></div><div class="td" style="left:1162px">在线</div><div class="td op" style="left:1326px">编辑</div><div class="td op" style="left:1362.5px">|</div><div class="td op" style="left:1374px">停用</div></div>
<div class="row" style="top:200px"><div class="cb"></div><div class="td num" style="left:94px">0000000140</div><div class="td" style="left:270px">设备名称</div><div class="td" style="left:446px">水温计</div><div class="td" style="left:622px">设备地址</div><div class="td num" style="left:798px">96%</div><div class="td num" style="left:974px">-</div><div class="dot" style="background:#1fbf6e"></div><div class="td" style="left:1162px">在线</div><div class="td op" style="left:1326px">编辑</div><div class="td op" style="left:1362.5px">|</div><div class="td op" style="left:1374px">停用</div></div>
<div class="row" style="top:250px"><div class="cb"></div><div class="td num" style="left:94px">0000000141</div><div class="td" style="left:270px">设备名称</div><div class="td" style="left:446px">水质采样器</div><div class="td" style="left:622px">设备地址</div><div class="td num" style="left:798px">96%</div><div class="td num" style="left:974px">-</div><div class="dot" style="background:#1fbf6e"></div><div class="td" style="left:1162px">在线</div><div class="td op" style="left:1326px">编辑</div><div class="td op" style="left:1362.5px">|</div><div class="td op" style="left:1374px">停用</div></div>
<div class="row" style="top:300px"><div class="cb"></div><div class="td num" style="left:94px">0000000142</div><div class="td" style="left:270px">设备名称</div><div class="td" style="left:446px">流量计</div><div class="td" style="left:622px">设备地址</div><div class="td num" style="left:798px">96%</div><div class="td num" style="left:974px">-</div><div class="dot" style="background:#1fbf6e"></div><div class="td" style="left:1162px">在线</div><div class="td op" style="left:1326px">编辑</div><div class="td op" style="left:1362.5px">|</div><div class="td op" style="left:1374px">停用</div></div>
<div class="row" style="top:350px"><div class="cb"></div><div class="td num" style="left:94px">0000000136</div><div class="td" style="left:270px">设备名称</div><div class="td" style="left:446px">流量计</div><div class="td" style="left:622px">设备地址</div><div class="td num" style="left:798px">96%</div><div class="td num" style="left:974px">-</div><div class="dot" style="background:#1fbf6e"></div><div class="td" style="left:1162px">在线</div><div class="td op" style="left:1326px">编辑</div><div class="td op" style="left:1362.5px">|</div><div class="td op" style="left:1374px">停用</div></div>
<div class="row" style="top:400px"><div class="cb"></div><div class="td num" style="left:94px">0000000136</div><div class="td" style="left:270px">设备名称</div><div class="td" style="left:446px">流量计</div><div class="td" style="left:622px">设备地址</div><div class="td num" style="left:798px">96%</div><div class="td num" style="left:974px">-</div><div class="dot" style="background:#1fbf6e"></div><div class="td" style="left:1162px">在线</div><div class="td op" style="left:1326px">编辑</div><div class="td op" style="left:1362.5px">|</div><div class="td op" style="left:1374px">停用</div></div>
<div class="row" style="top:450px"><div class="cb"></div><div class="td num" style="left:94px">0000000136</div><div class="td" style="left:270px">设备名称</div><div class="td" style="left:446px">流量计</div><div class="td" style="left:622px">设备地址</div><div class="td num" style="left:798px">96%</div><div class="td num" style="left:974px">-</div><div class="dot" style="background:#1fbf6e"></div><div class="td" style="left:1162px">在线</div><div class="td op" style="left:1326px">编辑</div><div class="td op" style="left:1362.5px">|</div><div class="td op" style="left:1374px">停用</div></div>
</div>

<div class="t" style="left:320px;top:788px;font-size:14px;color:#999">共 1000 条</div>
<div class="pg" style="left:1328px"><svg width="8" height="12" viewBox="0 0 8 12" style="margin-top:9px" fill="none" stroke="#777" stroke-width="1.4"><path d="M6 1 L1.5 6 L6 11"/></svg></div>
<div class="pg" style="left:1370px;background:#3370ff;border-color:#3370ff;color:#fff">1</div>
<div class="pg" style="left:1412px">2</div>
<div class="pg" style="left:1454px">3</div>
<div class="pg" style="left:1496px">4</div>
<div class="pg" style="left:1538px">5</div>
<div class="pg" style="left:1580px"></div><svg class="abs" style="left:1589px;top:795px" width="14" height="5" viewBox="0 0 14 5" fill="#777"><circle cx="2.2" cy="2.5" r="1.4"/><circle cx="7" cy="2.5" r="1.4"/><circle cx="11.8" cy="2.5" r="1.4"/></svg>
<div class="pg" style="left:1622px">50</div>
<div class="pg" style="left:1664px"><svg width="8" height="12" viewBox="0 0 8 12" style="margin-top:9px" fill="none" stroke="#777" stroke-width="1.4"><path d="M2 1 L6.5 6 L2 11"/></svg></div>
<div class="pg" style="left:1706px;width:86px"></div>
<div class="t" style="left:1720px;top:788px;font-size:14px;color:#888">10条/页</div>
<svg class="abs" style="left:1774px;top:795px" width="9" height="6" viewBox="0 0 9 6" fill="none" stroke="#888" stroke-width="1.3"><path d="M1 1 L4.5 4.5 L8 1"/></svg>
</body></html>
